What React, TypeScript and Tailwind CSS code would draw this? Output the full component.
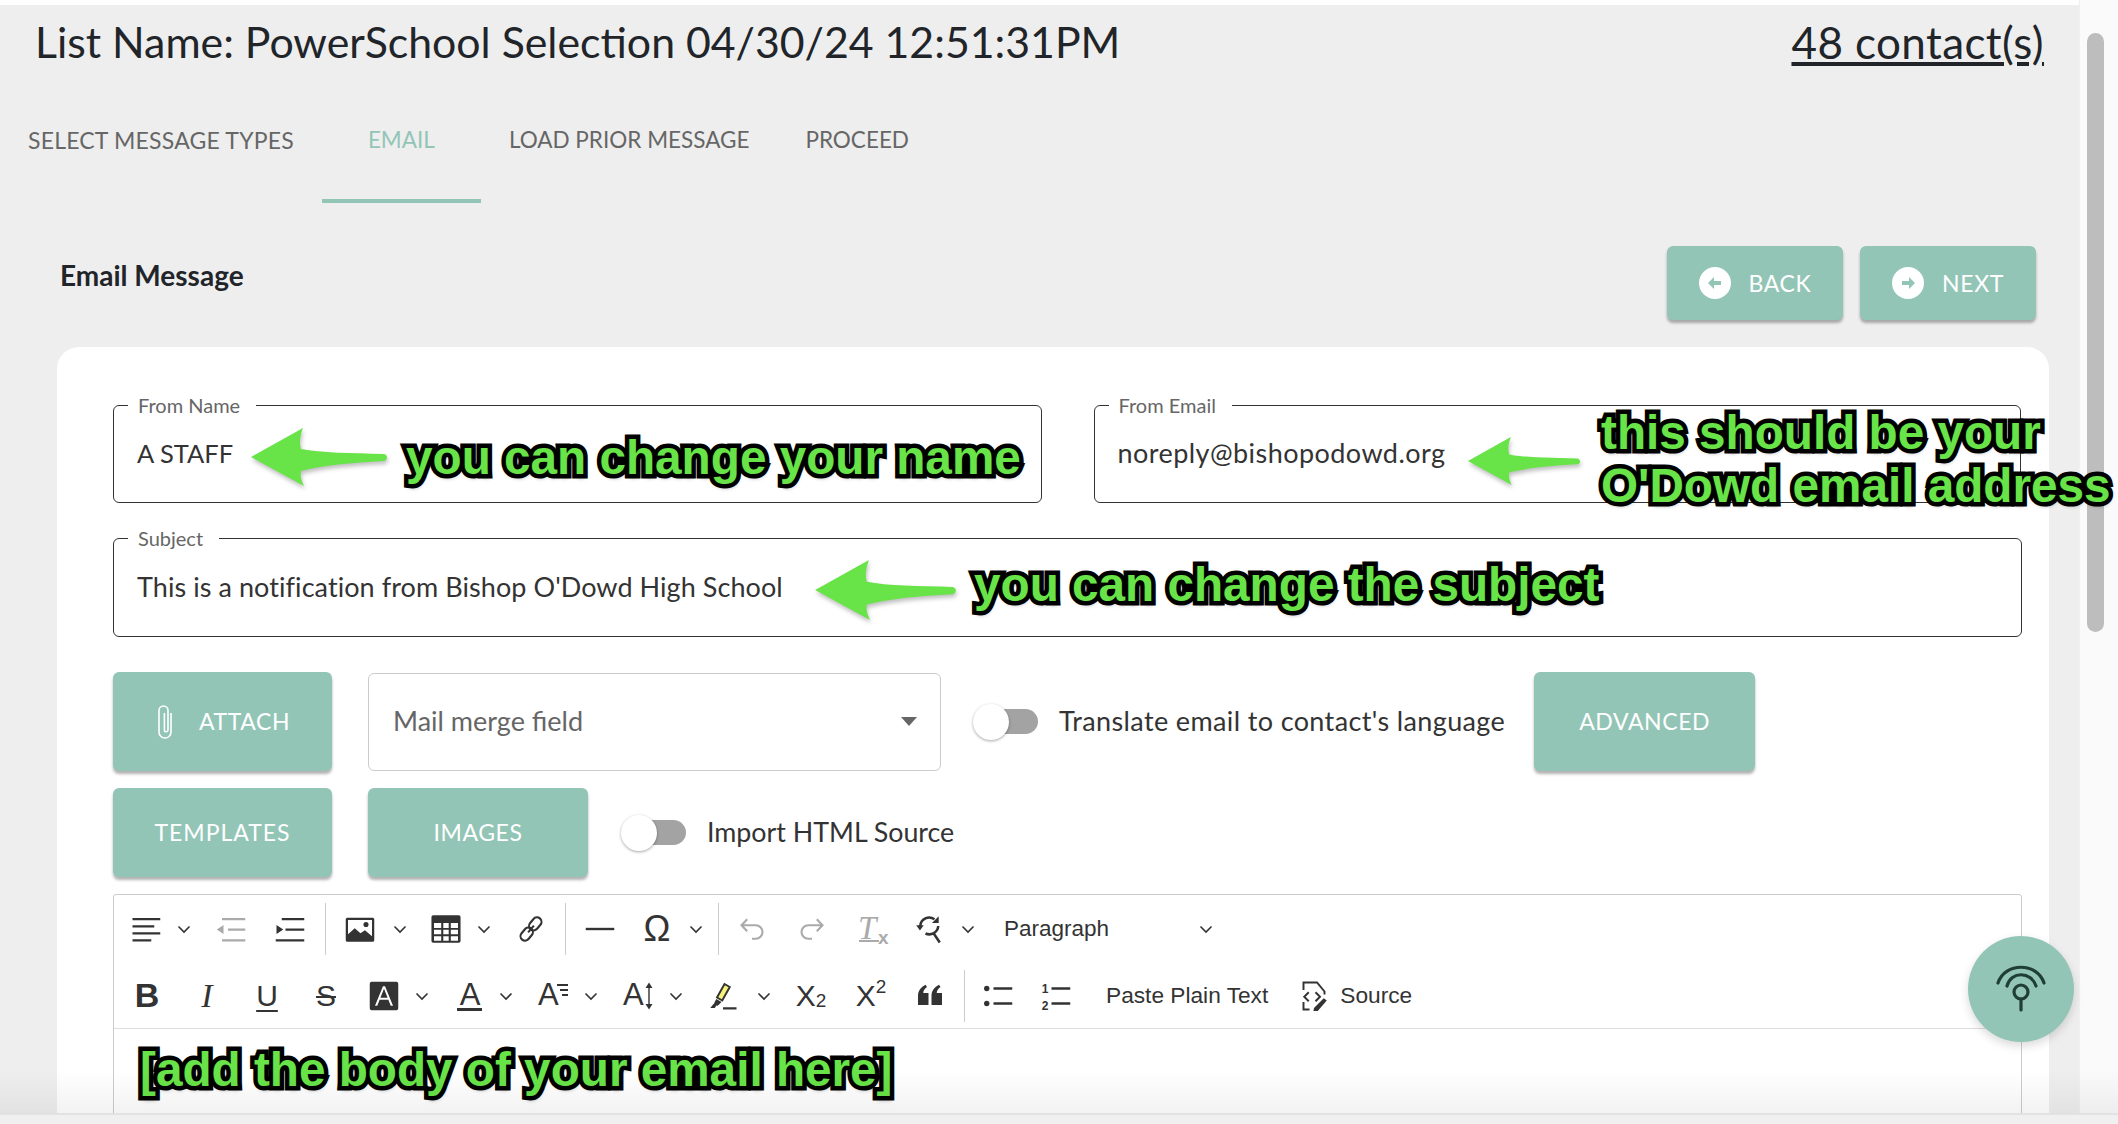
import React from 'react';

const Icon = ({ className = '', children }: { className?: string; children: React.ReactNode }) => (
    <svg viewBox="0 0 20 20" fill="currentColor" className={`w-[30px] h-[30px] shrink-0 text-[#333] ${className}`}>
        {children}
    </svg>
);

const Chevron = ({ className = '' }: { className?: string }) => (
    <svg viewBox="0 0 16 16" fill="none" stroke="#333" strokeWidth="1.6" className={`w-[16px] h-[16px] shrink-0 ${className}`}>
        <path d="M2.5 5.5 8 11l5.5-5.5" />
    </svg>
);

const Sep = ({ className = '' }: { className?: string }) => (
    <div className={`w-px h-[52px] bg-[#ccc] shrink-0 ${className}`} />
);

const Glyph = ({ className = '', children }: { className?: string; children: React.ReactNode }) => (
    <span className={`w-[30px] h-[30px] shrink-0 flex items-center justify-center text-[#333] font-['Liberation_Sans',sans-serif] ${className}`}>
        {children}
    </span>
);

const TealButton = ({ className = '', children }: { className?: string; children: React.ReactNode }) => (
    <button className={`flex items-center justify-center bg-[#93c5b7] text-white rounded-[6px] shadow-[0_3px_3px_rgba(0,0,0,0.3)] text-[23px] tracking-[0.6px] shrink-0 ${className}`}>
        {children}
    </button>
);

const Toggle = () => (
    <div className="relative w-[65px] h-[36px] shrink-0 flex items-center">
        <div className="absolute left-[12px] right-0 h-[25px] rounded-full bg-[#a3a3a3]" />
        <div className="absolute left-0 top-0 w-[36px] h-[36px] rounded-full bg-white shadow-[0_1px_3px_rgba(0,0,0,0.35)]" />
    </div>
);

const Field = ({ label, value, className = '', valueClass = '' }: { label: string; value: string; className?: string; valueClass?: string }) => (
    <fieldset className={`border border-[#333] rounded-[6px] ${className}`}>
        <legend className="ml-[14px] pl-[10px] pr-[16px] -mt-[1px] text-[20px] leading-[26px] text-[#666]">{label}</legend>
        <div className={`px-[23px] leading-[44px] text-[#333] ${valueClass}`}>{value}</div>
    </fieldset>
);

const Arrow = ({ className = '' }: { className?: string }) => (
    <svg viewBox="0 0 136 58" className={`absolute drop-shadow-[1px_3px_2px_rgba(0,0,0,0.25)] ${className}`}>
        <path d="M0 29 52 0C49 8 48 15 50 21 70 25 100 25 133 26 137 27 137 32 133 33 100 35 72 37 50 43 49 47 50 52 53 58Z" fill="#68e348" />
    </svg>
);

const annotation = "absolute whitespace-nowrap font-['Liberation_Sans',sans-serif] font-bold text-[#68e348] [-webkit-text-stroke:9px_#000] [paint-order:stroke_fill] [text-shadow:1px_4px_4px_rgba(0,0,0,0.35)]";

const App = () => {
    return (
        <div className="relative w-[2118px] h-[1124px] overflow-hidden bg-white flex font-['Lato',sans-serif]">
            <main className="w-[2079px] mt-[5px] bg-[#eeeeee] flex flex-col text-[#212529]">
                <div className="h-[74px] shrink-0 flex items-center justify-between pl-[35px] pr-[35px] text-[42.8px]">
                    <span>List Name: PowerSchool Selection 04/30/24 12:51:31PM</span>
                    <span className="underline text-[44px] tracking-[0.4px]">48 contact(s)</span>
                </div>

                <div className="h-[124px] shrink-0 flex leading-[30px] text-[#666]">
                    <div className="px-[28px] pt-[46px] text-[23px] tracking-[0.2px]">SELECT MESSAGE TYPES</div>
                    <div className="w-[159px] text-center pt-[46px] text-[22.5px] text-[#93c5b7] border-b-4 border-[#93c5b7]">EMAIL</div>
                    <div className="px-[28px] pt-[46px] text-[22.5px]">LOAD PRIOR MESSAGE</div>
                    <div className="px-[28px] pt-[46px] text-[22.5px]">PROCEED</div>
                </div>

                <div className="h-[144px] shrink-0 flex justify-between pl-[60px] pr-[43px] pt-[43px]">
                    <div className="font-bold text-[28px] leading-[34px] mt-[12px]">Email Message</div>
                    <div className="flex gap-[17px]">
                        <TealButton className="w-[176px] h-[74px] gap-[18px]">
                            <svg viewBox="0 0 32 32" className="w-[32px] h-[32px]">
                                <circle cx="16" cy="16" r="16" fill="#fff" />
                                <path d="M9 16l6-6v4h7v4h-7v4z" fill="#93c5b7" />
                            </svg>
                            BACK
                        </TealButton>
                        <TealButton className="w-[176px] h-[74px] gap-[18px]">
                            <svg viewBox="0 0 32 32" className="w-[32px] h-[32px]">
                                <circle cx="16" cy="16" r="16" fill="#fff" />
                                <path d="M23 16l-6-6v4h-7v4h7v4z" fill="#93c5b7" />
                            </svg>
                            NEXT
                        </TealButton>
                    </div>
                </div>

                <section className="flex-1 ml-[57px] w-[1992px] bg-white rounded-t-[22px] pt-[45px] pl-[56px] pr-[28px] overflow-hidden">
                    <div className="flex gap-[52px]">
                        <Field label="From Name" value="A STAFF" className="w-[929px] h-[111px]" valueClass="pt-[13px] text-[25.5px]" />
                        <Field label="From Email" value="noreply@bishopodowd.org" className="w-[928px] h-[111px]" valueClass="pt-[13px] text-[27px] tracking-[0.45px]" />
                    </div>
                    <Field label="Subject" value="This is a notification from Bishop O'Dowd High School" className="w-[1909px] h-[112px] mt-[22px]" valueClass="pt-[14px] text-[27px] tracking-[0.07px]" />

                    <div className="flex items-center mt-[35px]">
                        <TealButton className="w-[219px] h-[99px] gap-[24px]">
                            <svg viewBox="0 0 20 36" fill="none" stroke="#fff" strokeWidth="1.6" className="w-[20px] h-[36px]">
                                <path d="M16 9v19a6 6 0 0 1-12 0V6.5a4.5 4.5 0 0 1 9 0V26a1.8 1.8 0 0 1-3.6 0V9" />
                            </svg>
                            ATTACH
                        </TealButton>
                        <div className="ml-[36px] w-[573px] h-[98px] border border-[#ccc] rounded-[6px] flex items-center justify-between pl-[24px] pr-[23px] text-[27px] text-[#666]">
                            <span>Mail merge field</span>
                            <div className="w-0 h-0 border-x-[8px] border-x-transparent border-t-[9px] border-t-[#666]" />
                        </div>
                        <div className="ml-[32px]"><Toggle /></div>
                        <span className="ml-[21px] text-[27px] tracking-[0.37px] text-[#333] whitespace-nowrap">Translate email to contact's language</span>
                        <TealButton className="ml-[29px] w-[221px] h-[99px]">ADVANCED</TealButton>
                    </div>

                    <div className="flex items-center mt-[17px]">
                        <TealButton className="w-[219px] h-[89px] tracking-[1px]">TEMPLATES</TealButton>
                        <TealButton className="ml-[36px] w-[220px] h-[89px]">IMAGES</TealButton>
                        <div className="ml-[33px]"><Toggle /></div>
                        <span className="ml-[21px] text-[26.8px] text-[#333] whitespace-nowrap">Import HTML Source</span>
                    </div>

                    <div className="mt-[17px] w-[1909px] h-[400px] border border-[#ccc] rounded-t-[3px]">
                        <div className="h-[134px] border-b border-[#ddd] font-['Liberation_Sans',sans-serif]">
                            <div className="h-[67px] pl-[17px] flex items-center">
                                <Icon><path d="M1 2.6h18.500v1.500H1zM1 7.500h14.500v1.500H1zM1 12.200h18.500v1.500H1zM1 16.900h12.500v1.500H1z" /></Icon>
                                <Chevron className="ml-[15px]" />
                                <Icon className="ml-[24px] !text-[#aaa]"><path d="M4 2.600h15.500v1.500H4zM8 9.700h11.500v1.500H8zM4 16.900h15.500v1.500H4zM.5 10.400 5 7.400v6z" /></Icon>
                                <Icon className="ml-[29px]"><path d="M4.500 2.600h15v1.500h-15zM7 9.700h12.500v1.500H7zM.5 16.900h19v1.500H.5zM5.500 10.400 1 7.400v6z" /></Icon>
                                <Sep className="ml-[20px]" />
                                <Icon className="ml-[19px]">
                                    <path fillRule="evenodd" d="M1.500 2.500h17a1 1 0 0 1 1 1v14a1 1 0 0 1-1 1h-17a1 1 0 0 1-1-1v-14a1 1 0 0 1 1-1zM2 4v9.500l4.500-4 3.800 3.300 3-2 4.700 4V4z" />
                                    <circle cx="14" cy="7" r="1.700" />
                                </Icon>
                                <Chevron className="ml-[17px]" />
                                <Icon className="ml-[23px]">
                                    <path fillRule="evenodd" d="M1.500.8h17a1.200 1.200 0 0 1 1.200 1.200v16a1.200 1.200 0 0 1-1.200 1.200h-17A1.200 1.200 0 0 1 .3 18V2A1.200 1.200 0 0 1 1.500.8zM2 6v3.300h4.800V6zm6.200 0v3.300h3.600V6zm5 0v3.300H18V6zM2 10.500v3h4.800v-3zm6.200 0v3h3.600v-3zm5 0v3H18v-3zM2 14.800v3h4.800v-3zm6.200 0v3h3.600v-3zm5 0v3H18v-3z" />
                                </Icon>
                                <Chevron className="ml-[15px]" />
                                <Icon className="ml-[24px]">
                                    <g transform="rotate(40 10 10)" fill="none" stroke="currentColor" strokeWidth="1.400">
                                        <rect x="7" y="0.800" width="6" height="9.500" rx="3" />
                                        <rect x="7" y="9.700" width="6" height="9.500" rx="3" />
                                        <path d="M10 7v6" />
                                    </g>
                                </Icon>
                                <Sep className="ml-[19px]" />
                                <Icon className="ml-[19px]"><path d="M.5 9.200h19v1.600H.5z" /></Icon>
                                <Glyph className="ml-[27px] text-[36px] leading-none">Ω</Glyph>
                                <Chevron className="ml-[16px]" />
                                <Sep className="ml-[14px]" />
                                <Icon className="ml-[18px] !text-[#aaa]">
                                    <path d="M3 7.500h9.500a4.500 4.500 0 0 1 0 9H10M6.800 3.500 3 7.500l3.800 4" fill="none" stroke="currentColor" strokeWidth="1.400" />
                                </Icon>
                                <Icon className="ml-[30px] !text-[#aaa]">
                                    <path d="M17 7.500H7.500a4.500 4.500 0 0 0 0 9H10M13.200 3.500l3.800 4-3.800 4" fill="none" stroke="currentColor" strokeWidth="1.400" />
                                </Icon>
                                <span className="relative ml-[31px] w-[30px] h-[30px] shrink-0 text-[#aaa] font-['Liberation_Serif',serif] italic text-[33px] leading-[28px] border-b-2 border-transparent">
                                    T<span className="absolute left-[20px] top-[10px] not-italic text-[19px] font-['Liberation_Sans',sans-serif] font-bold">x</span>
                                    <span className="absolute left-[1px] bottom-0 w-[20px] h-[2px] bg-[#aaa]" />
                                </span>
                                <Icon className="ml-[27px]">
                                    <g fill="none" stroke="currentColor" strokeWidth="1.700">
                                        <path d="M3.500 8a6 6 0 0 1 9.500-4.500M15.500 8a6 6 0 0 1-8.500 5M12.500 13l4 6" />
                                    </g>
                                    <path d="M.8 7.500h5L3.300 11zM15.800 1.500v4.500h-4.500z" />
                                </Icon>
                                <Chevron className="ml-[15px]" />
                                <span className="ml-[28px] text-[22.500px] text-[#333]">Paragraph</span>
                                <Chevron className="ml-[89px]" />
                            </div>
                            <div className="h-[67px] pl-[18px] flex items-center">
                                <Glyph className="font-bold text-[34px]">B</Glyph>
                                <Glyph className="ml-[30px] !font-['Liberation_Serif',serif] italic text-[34px]">I</Glyph>
                                <Glyph className="ml-[30px] text-[30px] underline underline-offset-[4px] decoration-2">U</Glyph>
                                <Glyph className="ml-[29px] text-[30px] line-through decoration-2">S</Glyph>
                                <Icon className="ml-[28px]">
                                    <path fillRule="evenodd" d="M1.800.5h16.400a1.300 1.300 0 0 1 1.300 1.300v16.400a1.300 1.300 0 0 1-1.300 1.300H1.800a1.300 1.300 0 0 1-1.300-1.300V1.800A1.300 1.300 0 0 1 1.800.5zM9.300 3.500 4 16.500h1.500l1.600-4h5.800l1.600 4H16L10.700 3.500zM10 5.200l2.400 6H7.600z" />
                                </Icon>
                                <Chevron className="ml-[15px]" />
                                <Glyph className="ml-[25px] relative text-[31px]">A<span className="absolute left-[2px] right-[3px] bottom-0 h-[3px] bg-[#333]" /></Glyph>
                                <Chevron className="ml-[13px]" />
                                <Glyph className="ml-[24px] relative text-[31px] justify-start">
                                    A
                                    <span className="absolute right-0 top-[3px] w-[11px] h-[2px] bg-[#333]" />
                                    <span className="absolute right-0 top-[8px] w-[8px] h-[2px] bg-[#333]" />
                                    <span className="absolute right-0 top-[13px] w-[6px] h-[2px] bg-[#333]" />
                                </Glyph>
                                <Chevron className="ml-[15px]" />
                                <Glyph className="ml-[24px] relative text-[31px] justify-start">
                                    A
                                    <svg viewBox="0 0 10 30" className="absolute -right-[1px] top-0 w-[10px] h-[30px]" fill="#333">
                                        <path d="M4.300 6h1.400v18H4.300zM5 1.500 8.500 7h-7zM5 28.500 1.500 23h7z" />
                                    </svg>
                                </Glyph>
                                <Chevron className="ml-[15px]" />
                                <Icon className="ml-[24px]">
                                    <path d="m6 11 5-9 3.500 2-5 9z" fill="#f7f27a" stroke="currentColor" strokeWidth="1.300" />
                                    <path d="M5.500 12 9 14l-2.500 2.500-3-.5zM10 17.500h9v1.500h-9zM1.500 18l2-2.500 2 1-1 1.500z" />
                                </Icon>
                                <Chevron className="ml-[18px]" />
                                <Glyph className="ml-[24px] text-[30px] leading-none">X<sub className="text-[19px] leading-none">2</sub></Glyph>
                                <Glyph className="ml-[30px] text-[30px] leading-none">X<sup className="text-[19px] leading-none">2</sup></Glyph>
                                <Icon className="ml-[29px]">
                                    <path d="M2 16V10c0-3.500 2-6 5-7.500l1 1.500C6.500 5 5.500 6.500 5.500 8H9v8zM11 16V10c0-3.500 2-6 5-7.500l1 1.500c-1.500 1-2.500 2.500-2.500 4H18v8z" />
                                </Icon>
                                <Sep className="ml-[19px]" />
                                <Icon className="ml-[18px]">
                                    <circle cx="2.500" cy="5" r="1.800" />
                                    <circle cx="2.500" cy="15" r="1.800" />
                                    <path d="M7 4.200h12.500v1.600H7zM7 14.200h12.500v1.600H7z" />
                                </Icon>
                                <Icon className="ml-[28px]">
                                    <text x="0.500" y="8" fontSize="8" fontWeight="700" fontFamily="Liberation Sans">1</text>
                                    <text x="0.500" y="19" fontSize="8" fontWeight="700" fontFamily="Liberation Sans">2</text>
                                    <path d="M7 4.200h12.500v1.600H7zM7 14.200h12.500v1.600H7z" />
                                </Icon>
                                <span className="ml-[35px] text-[22.700px] text-[#333] whitespace-nowrap">Paste Plain Text</span>
                                <Icon className="ml-[31px]">
                                    <g fill="none" stroke="currentColor" strokeWidth="1.300">
                                        <path d="M3 6V1h9l5 6v2M3 14v5h4M6.500 7.500 3.500 10.500l3 3M11 7.500l3 3-3 3" />
                                    </g>
                                    <path d="M16.500 11.500 18.500 13l-6 7-3 .5 .5-2.500z" />
                                </Icon>
                                <span className="ml-[11px] text-[22.700px] text-[#333]">Source</span>
                            </div>
                        </div>
                    </div>
                </section>
            </main>

            <aside className="w-[39px] bg-[#fafafa] border-l border-[#f0f0f0] shrink-0">
                <div className="mt-[33px] ml-[7px] w-[17px] h-[599px] rounded-full bg-[#bdbdbd]" />
            </aside>

            <button className="absolute left-[1968px] top-[936px] w-[106px] h-[106px] rounded-full bg-[#93c5b7] shadow-[0_4px_10px_rgba(0,0,0,0.15)] flex items-center justify-center">
                <svg viewBox="0 0 60 60" fill="none" stroke="#1f3f36" strokeWidth="3.200" strokeLinecap="round" className="w-[60px] h-[60px]">
                    <circle cx="30" cy="33" r="7" />
                    <path d="M30 40v11M7 24C14 3 46 3 53 24M16 27c4-15 24-15 29 0" />
                </svg>
            </button>

            <Arrow className="left-[251px] top-[428px] w-[136px] h-[58px]" />
            <div className={`${annotation} left-[406px] top-[428px] text-[47.7px] leading-[60px]`}>you can change your name</div>

            <Arrow className="left-[1468px] top-[437px] w-[112px] h-[48px]" />
            <div className={`${annotation} left-[1601px] top-[406px] text-[47.7px] leading-[53px]`}>
                this should be your<br />O'Dowd email address
            </div>

            <Arrow className="left-[815px] top-[560px] w-[141px] h-[60px]" />
            <div className={`${annotation} left-[974px] top-[555px] text-[47.7px] leading-[60px]`}>you can change the subject</div>

            <div className={`${annotation} left-[140px] top-[1040px] text-[47.7px] leading-[60px]`}>[add the body of your email here]</div>

            <div className="absolute left-0 right-0 top-[1070px] h-[43px] bg-gradient-to-b from-transparent to-black/5 pointer-events-none" />
            <div className="absolute left-0 right-0 top-[1113px] h-[11px] bg-[#f0f0f0] border-t-2 border-[#e2e2e2]" />
        </div>
    );
};

export default App;
